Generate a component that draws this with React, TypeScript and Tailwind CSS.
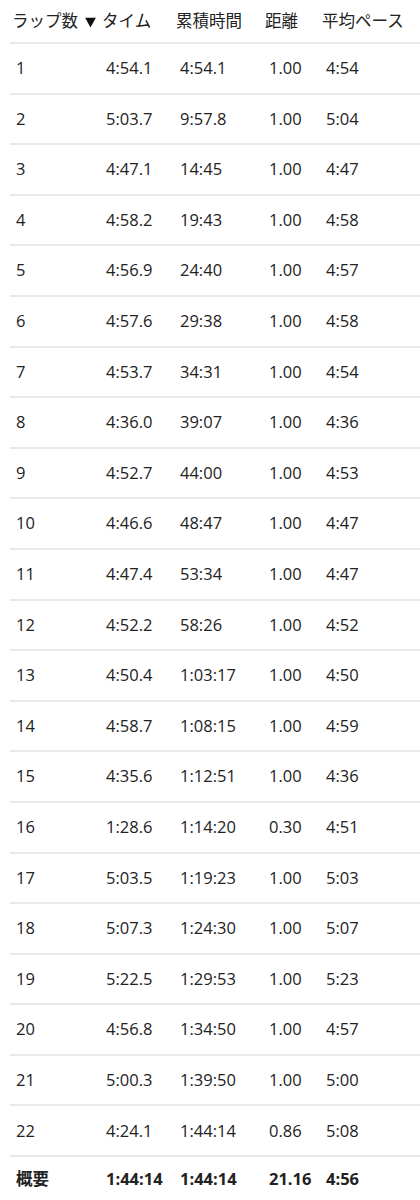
import React from 'react';

const laps: [string, string, string, string, string][] = [
  ['1', '4:54.1', '4:54.1', '1.00', '4:54'],
  ['2', '5:03.7', '9:57.8', '1.00', '5:04'],
  ['3', '4:47.1', '14:45', '1.00', '4:47'],
  ['4', '4:58.2', '19:43', '1.00', '4:58'],
  ['5', '4:56.9', '24:40', '1.00', '4:57'],
  ['6', '4:57.6', '29:38', '1.00', '4:58'],
  ['7', '4:53.7', '34:31', '1.00', '4:54'],
  ['8', '4:36.0', '39:07', '1.00', '4:36'],
  ['9', '4:52.7', '44:00', '1.00', '4:53'],
  ['10', '4:46.6', '48:47', '1.00', '4:47'],
  ['11', '4:47.4', '53:34', '1.00', '4:47'],
  ['12', '4:52.2', '58:26', '1.00', '4:52'],
  ['13', '4:50.4', '1:03:17', '1.00', '4:50'],
  ['14', '4:58.7', '1:08:15', '1.00', '4:59'],
  ['15', '4:35.6', '1:12:51', '1.00', '4:36'],
  ['16', '1:28.6', '1:14:20', '0.30', '4:51'],
  ['17', '5:03.5', '1:19:23', '1.00', '5:03'],
  ['18', '5:07.3', '1:24:30', '1.00', '5:07'],
  ['19', '5:22.5', '1:29:53', '1.00', '5:23'],
  ['20', '4:56.8', '1:34:50', '1.00', '4:57'],
  ['21', '5:00.3', '1:39:50', '1.00', '5:00'],
  ['22', '4:24.1', '1:44:14', '0.86', '5:08'],
];

const font = { fontFamily: '"Open Sans", "Noto Sans CJK JP", sans-serif' };

function Cells({ row }: { row: string[] }) {
  return (
    <>
      <div className="w-[90px] shrink-0">{row[0]}</div>
      <div className="w-[74px] shrink-0">{row[1]}</div>
      <div className="w-[89px] shrink-0">{row[2]}</div>
      <div className="w-[57px] shrink-0">{row[3]}</div>
      <div className="flex-1">{row[4]}</div>
    </>
  );
}

export default function App() {
  return (
    <div className="bg-white text-[#222] text-[16.5px] leading-none pl-[10px] overflow-hidden" style={font}>
      <div className="flex items-center h-[44px] pl-[2px] border-b-2 border-[#e9e9e9]">
        <div className="w-[90px] shrink-0">ラップ数</div>
        <div className="w-[74px] shrink-0 relative">
          <svg className="absolute left-[-17px] top-1/2 -translate-y-[35%]" width="11" height="10" viewBox="0 0 11 10">
            <path d="M0 0H11L5.5 10Z" fill="#111" />
          </svg>
          タイム
        </div>
        <div className="w-[89px] shrink-0">累積時間</div>
        <div className="w-[57px] shrink-0">距離</div>
        <div className="flex-1">平均ペース</div>
      </div>
      {laps.map((row) => (
        <div key={row[0]} className="flex items-center h-[50.6px] pl-[6px] border-b-2 border-[#e9e9e9]">
          <Cells row={row} />
        </div>
      ))}
      <div className="flex items-center h-[44px] pl-[6px] font-bold">
        <Cells row={['概要', '1:44:14', '1:44:14', '21.16', '4:56']} />
      </div>
    </div>
  );
}
